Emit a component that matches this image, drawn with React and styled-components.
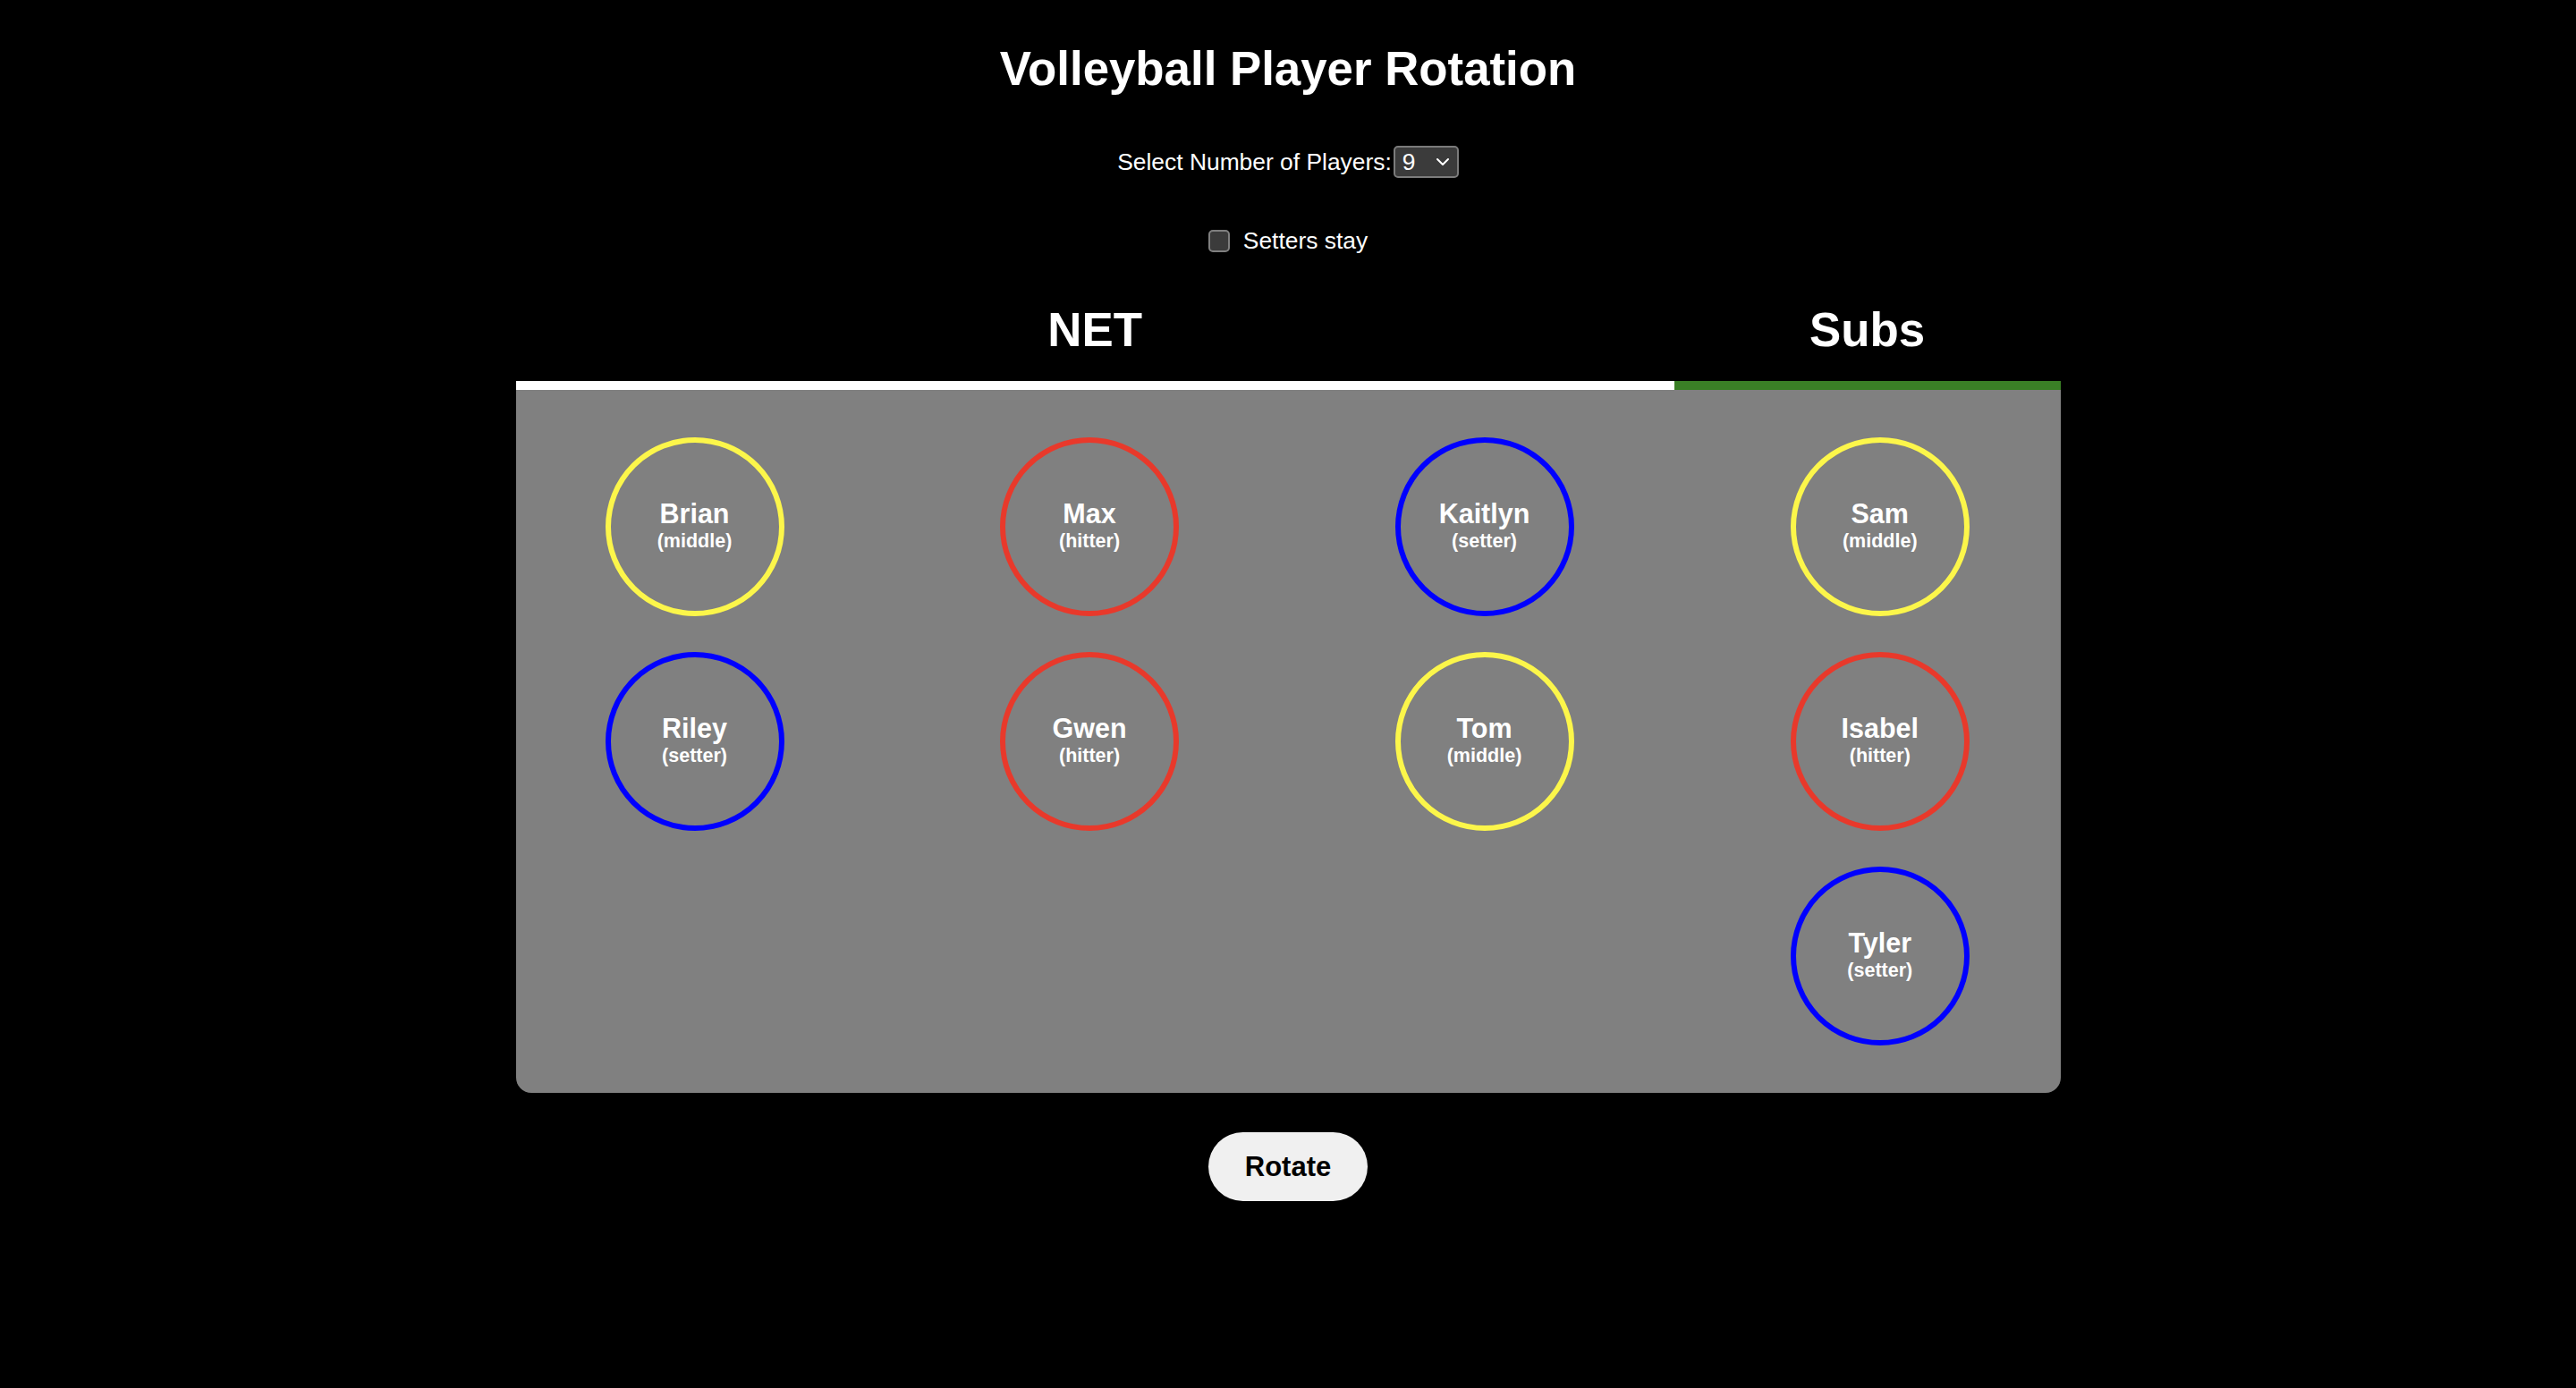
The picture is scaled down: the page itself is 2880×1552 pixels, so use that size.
import React, { useState } from 'react';
import styled, { createGlobalStyle } from 'styled-components';

const GlobalStyle = createGlobalStyle`
	html, body {
		margin: 0;
		padding: 0;
		background-color: #000;
		color: #fff;
		font-family: 'Liberation Sans', Arial, Helvetica, sans-serif;
	}
`;

const Page = styled.div`
	display: flex;
	flex-direction: column;
	align-items: center;
	padding-top: 46px;
	min-height: 1552px;
	box-sizing: border-box;
`;

const Title = styled.h1`
	margin: 0;
	font-size: 52.8px;
	font-weight: bold;
	line-height: 61px;
`;

const SelectRow = styled.label`
	margin-top: 56px;
	display: flex;
	align-items: center;
	font-size: 26.4px;
	height: 36px;
`;

const SelectWrap = styled.div`
	position: relative;
	width: 73px;
	height: 36px;
	margin-left: 2px;
`;

const PlayerSelect = styled.select`
	appearance: none;
	width: 100%;
	height: 100%;
	box-sizing: border-box;
	background-color: #3b3b3b;
	color: #fff;
	border: 2px solid #7b7b7b;
	border-radius: 5px;
	font-family: inherit;
	font-size: 26.4px;
	padding: 0 0 0 8px;
	outline: none;
`;

const Chevron = styled.svg`
	position: absolute;
	right: 10px;
	top: 13px;
	pointer-events: none;
`;

const CheckRow = styled.label`
	margin-top: 55px;
	display: flex;
	align-items: center;
	gap: 15px;
	font-size: 26.4px;
	height: 30px;
`;

const CheckBox = styled.input`
	appearance: none;
	margin: 0;
	width: 24px;
	height: 25px;
	box-sizing: border-box;
	background-color: #3b3b3b;
	border: 2px solid #7f7f7f;
	border-radius: 5px;
`;

const Board = styled.div`
	margin-top: 55px;
	width: 1727px;
	display: flex;
`;

const Section = styled.div`
	flex: ${(props) => (props.subs ? '0 0 25%' : '0 0 75%')};
	display: flex;
	flex-direction: column;
`;

const SectionTitle = styled.h2`
	margin: 0;
	height: 87px;
	font-size: 52.8px;
	font-weight: bold;
	line-height: 60px;
	text-align: center;
`;

const Zone = styled.div`
	flex: 1;
	background-color: #808080;
	border-top: 10px solid ${(props) => (props.subs ? '#3a7f26' : '#ffffff')};
	border-bottom-left-radius: ${(props) => (props.subs ? '0' : '17px')};
	border-bottom-right-radius: ${(props) => (props.subs ? '17px' : '0')};
	padding: 53px 0 53px ${(props) => (props.subs ? '130px' : '100px')};
	display: grid;
	grid-template-columns: ${(props) => (props.subs ? '200px' : 'repeat(3, 200px)')};
	grid-auto-rows: 200px;
	column-gap: 241.5px;
	row-gap: 40px;
	align-content: start;
`;

const ringColors = {
	middle: '#fcf64a',
	hitter: '#e8392b',
	setter: '#0000ff',
};

const Player = styled.div`
	width: 200px;
	height: 200px;
	box-sizing: border-box;
	border-radius: 50%;
	border: 6px solid ${(props) => ringColors[props.role]};
	display: flex;
	flex-direction: column;
	align-items: center;
	justify-content: center;
	font-weight: bold;
	padding-bottom: 4px;
`;

const Name = styled.div`
	font-size: 30.5px;
	line-height: 36px;
`;

const Role = styled.div`
	font-size: 21.5px;
	line-height: 26px;
`;

const RotateButton = styled.button`
	margin-top: 44px;
	width: 178px;
	height: 77px;
	border: none;
	border-radius: 39px;
	background-color: #f0f0f0;
	color: #000;
	font-family: inherit;
	font-size: 31px;
	font-weight: bold;
	cursor: pointer;
`;

const court = [
	{ name: 'Brian', role: 'middle' },
	{ name: 'Max', role: 'hitter' },
	{ name: 'Kaitlyn', role: 'setter' },
	{ name: 'Riley', role: 'setter' },
	{ name: 'Gwen', role: 'hitter' },
	{ name: 'Tom', role: 'middle' },
];

const subs = [
	{ name: 'Sam', role: 'middle' },
	{ name: 'Isabel', role: 'hitter' },
	{ name: 'Tyler', role: 'setter' },
];

const PlayerCircle = ({ name, role }) => (
	<Player role={role}>
		<Name>{name}</Name>
		<Role>({role})</Role>
	</Player>
);

const App = () => {
	const [count, setCount] = useState('9');
	const [settersStay, setSettersStay] = useState(false);

	return (
		<>
			<GlobalStyle />
			<Page>
				<Title>Volleyball Player Rotation</Title>
				<SelectRow>
					Select Number of Players:
					<SelectWrap>
						<PlayerSelect value={count} onChange={(e) => setCount(e.target.value)}>
							{[6, 7, 8, 9, 10, 11, 12].map((n) => (
								<option key={n} value={n}>
									{n}
								</option>
							))}
						</PlayerSelect>
						<Chevron width="16" height="10" viewBox="0 0 16 10">
							<path d="M2 2 L8 8 L14 2" fill="none" stroke="#fff" strokeWidth="2" strokeLinecap="round" strokeLinejoin="round" />
						</Chevron>
					</SelectWrap>
				</SelectRow>
				<CheckRow>
					<CheckBox type="checkbox" checked={settersStay} onChange={() => setSettersStay(!settersStay)} />
					Setters stay
				</CheckRow>
				<Board>
					<Section>
						<SectionTitle>NET</SectionTitle>
						<Zone>
							{court.map((p) => (
								<PlayerCircle key={p.name} {...p} />
							))}
						</Zone>
					</Section>
					<Section subs>
						<SectionTitle subs>Subs</SectionTitle>
						<Zone subs>
							{subs.map((p) => (
								<PlayerCircle key={p.name} {...p} />
							))}
						</Zone>
					</Section>
				</Board>
				<RotateButton>Rotate</RotateButton>
			</Page>
		</>
	);
};

export default App;
